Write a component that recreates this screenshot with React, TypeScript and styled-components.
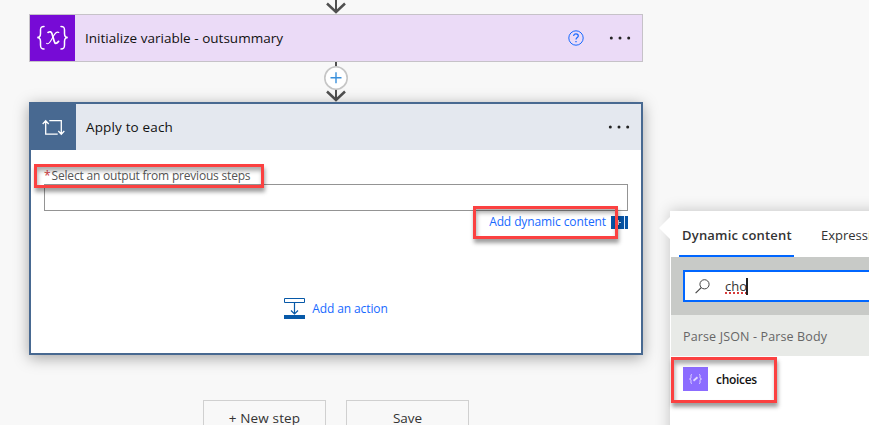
import React from 'react';
import styled, { createGlobalStyle } from 'styled-components';

const GlobalStyle = createGlobalStyle`
  * { box-sizing: border-box; }
  body { margin: 0; background: #f8f8f8; overflow: hidden; }
`;

const Page = styled.main`
  position: relative;
  display: flex;
  align-items: flex-start;
  width: 869px;
  height: 425px;
  overflow: hidden;
  background: #f8f8f8;
  color: #111;
  font-family: 'Open Sans', 'Noto Sans', sans-serif;
`;

const Flow = styled.section`
  display: flex;
  flex-direction: column;
  align-items: center;
  flex: none;
  width: 614px;
  margin-left: 29px;
`;

const Label = styled.span<{ $size?: number; $spacing?: number; $color?: string; $weight?: number }>`
  font-size: ${(p) => p.$size ?? 13}px;
  letter-spacing: ${(p) => p.$spacing ?? 0}px;
  color: ${(p) => p.$color ?? '#111'};
  font-weight: ${(p) => p.$weight ?? 400};
  line-height: 18px;
  white-space: pre;
`;

const Icon = styled.svg`
  display: block;
  flex: none;
`;

const VariableCard = styled.article`
  display: flex;
  align-items: center;
  width: 100%;
  height: 48px;
  border: 1px solid #c6c2c8;
  background: #ebdbf7;
`;

const IconTile = styled.div<{ $color: string; $width: number }>`
  display: grid;
  place-items: center;
  align-self: stretch;
  flex: none;
  width: ${(p) => p.$width}px;
  margin-right: 10px;
  background: ${(p) => p.$color};
`;

const Actions = styled.div`
  display: flex;
  align-items: center;
  gap: 25px;
  margin-left: auto;
  padding-right: 11px;
`;

const LoopCard = styled.article`
  display: flex;
  flex-direction: column;
  width: 100%;
  height: 253px;
  border: 2px solid #486991;
  background: #fff;
  box-shadow: 0 3px 14px rgba(0, 0, 0, 0.34);
`;

const LoopHeader = styled.header`
  display: flex;
  align-items: center;
  height: 46px;
  background: #e4e8ef;
`;

const LoopBody = styled.div`
  display: flex;
  flex-direction: column;
  padding: 17px 13px 0;
`;

const FieldLabel = styled.label`
  display: flex;
  gap: 1px;
  height: 17px;
`;

const OutputInput = styled.div`
  height: 27px;
  border: 1px solid #949494;
  background: #fff;
`;

const DynamicRow = styled.div`
  display: flex;
  justify-content: flex-end;
  align-items: center;
  gap: 5px;
  height: 22px;
`;

const AddAction = styled.div`
  display: flex;
  align-items: center;
  align-self: center;
  gap: 7px;
  margin: 65px 0 0 0;
`;

const Buttons = styled.div`
  display: flex;
  gap: 20px;
  margin-top: 45px;
`;

const Button = styled.div`
  display: flex;
  justify-content: center;
  width: 123px;
  height: 36px;
  padding-top: 8px;
  border: 1px solid #d0d0d0;
`;

const Flyout = styled.aside`
  flex: none;
  width: 260px;
  height: 260px;
  margin: 211px 0 0 27px;
  position: relative;
  background: #fff;
  box-shadow: 0 0 14px rgba(0, 0, 0, 0.22);
`;

const Pointer = styled(Icon)`
  position: absolute;
  left: -12px;
  top: 5px;
`;

const Tabs = styled.nav`
  display: flex;
  gap: 24px;
  height: 46px;
  padding-left: 9px;
`;

const Tab = styled.div<{ $active?: boolean }>`
  padding: 12px 0 0 3px;
  width: ${(p) => (p.$active ? '115px' : 'auto')};
  border-bottom: 2px solid ${(p) => (p.$active ? '#0066ff' : 'transparent')};
`;

const SearchBand = styled.div`
  height: 58px;
  margin-left: 1px;
  padding: 13px 0 0 12px;
  background: #c8cac7;
`;

const SearchBox = styled.div`
  display: flex;
  align-items: center;
  width: 280px;
  height: 32px;
  padding-left: 10px;
  border: 2px solid #0066ff;
  background: #fff;
`;

const Query = styled.div`
  display: flex;
  align-items: center;
  margin-left: 15px;
  & > span {
    text-decoration: underline dotted #d83b3b 2px;
    text-underline-offset: 1px;
    text-decoration-skip-ink: none;
  }
`;

const Caret = styled.i`
  width: 2px;
  height: 17px;
  margin-left: -1px;
  background: #222;
`;

const GroupHeader = styled.div`
  height: 41px;
  margin-left: 1px;
  padding: 9px 0 0 12px;
  background: #e8eae7;
`;

const ResultRow = styled.div`
  display: flex;
  align-items: center;
  gap: 8px;
  height: 46px;
  padding-left: 13px;
  & > span { padding-top: 2px; }
`;

const Highlight = styled.div<{ $x: number; $y: number; $w: number; $h: number }>`
  position: absolute;
  left: ${(p) => p.$x}px;
  top: ${(p) => p.$y}px;
  width: ${(p) => p.$w}px;
  height: ${(p) => p.$h}px;
  border: 3px solid #fb4141;
  box-shadow: 1px 4px 4px rgba(0, 0, 0, 0.38), inset 1px 4px 4px rgba(0, 0, 0, 0.32);
`;

const Dots = () => (
  <Icon width="22" height="4" viewBox="0 0 22 4" fill="#222">
    <circle cx="2.3" cy="2" r="1.5" />
    <circle cx="11" cy="2" r="1.5" />
    <circle cx="19.7" cy="2" r="1.5" />
  </Icon>
);

const TopArrow = () => (
  <Icon width="24" height="14" viewBox="0 0 24 14" fill="none" stroke="#505050">
    <path d="M12 0V12" strokeWidth="2" />
    <path d="M3 3.5L12 12L21 3.5" strokeWidth="2.5" />
  </Icon>
);

const InsertArrow = () => (
  <Icon width="26" height="40" viewBox="0 0 26 40" fill="none" stroke="#505050">
    <path d="M13 0V38" strokeWidth="2" />
    <path d="M4 29.5L13 38L22 29.5" strokeWidth="2.5" />
    <circle cx="13" cy="16" r="11.2" fill="#fff" stroke="#c6c6c6" strokeWidth="1.6" />
    <path d="M7.5 15.7H18.5M13 10.2V21.2" stroke="#3990dc" strokeWidth="1.4" />
  </Icon>
);

const VariableIcon = () => (
  <Icon width="33" height="26" viewBox="0 0 33 26" fill="none" stroke="#fff" strokeLinecap="round">
    <path d="M8 1.5C4.5 1.5 4.5 3 4.5 5V8.5C4.5 11 4 12.5 1.2 12.5C4 12.5 4.5 14 4.5 16.5V20C4.5 22.5 4.8 24 8 24" strokeWidth="1.5" />
    <path d="M25 1.5C28.5 1.5 28.5 3 28.5 5V8.5C28.5 11 29 12.5 31.8 12.5C29 12.5 28.5 14 28.5 16.5V20C28.5 22.5 28.2 24 25 24" strokeWidth="1.5" />
    <path d="M12 7.4C14.2 6.2 15.4 6.6 16.1 9L18.2 16.2C18.9 19 20.4 19 22.6 16.4" strokeWidth="1.7" />
    <path d="M22.8 7.4C21 6.4 19.4 7.6 17.3 11.3C15 15.5 13 20 10.6 18.4" strokeWidth="1.1" />
  </Icon>
);

const LoopIcon = () => (
  <Icon width="23" height="17" viewBox="0 0 23 17" fill="none" stroke="#fff" strokeWidth="1.3">
    <path d="M3.7 1.5V15.2H15.7M.7 5L3.7 1.7L6.7 5M7.3 1.7H19.3V15M16.3 12L19.3 15.2L22.3 12" />
  </Icon>
);

const HelpIcon = () => (
  <Icon width="16" height="16" viewBox="0 0 16 16" fill="none" stroke="#1769ff">
    <circle cx="8" cy="8" r="7.2" strokeWidth="1" />
    <path d="M5.7 6C5.7 4.6 6.6 3.8 8 3.8S10.3 4.7 10.3 5.9C10.3 7.5 8 7.6 8 9.6" strokeWidth="1.2" />
    <path d="M8 11V12.3" strokeWidth="1.3" />
  </Icon>
);

const ContentIcon = () => (
  <Icon width="17" height="13" viewBox="0 0 17 13">
    <path fill="#0754a5" d="M0 0H17V13H0Z" />
    <path d="M5 6.5H10M7.5 4V9M13.5 0V13" stroke="#dcecff" />
  </Icon>
);

const ActionIcon = () => (
  <Icon width="21" height="21" viewBox="0 0 21 21" fill="none" stroke="#0759a8">
    <path d="M.5 .5H20.5V4.5H.5Z" />
    <path d="M10.5 5V15.5M7 12.5L10.5 16L14 12.5" strokeWidth="1.2" />
    <path d="M0 17H21V21H0Z" fill="#0759a8" stroke="none" />
  </Icon>
);

const SearchIcon = () => (
  <Icon width="15" height="15" viewBox="0 0 15 15" fill="none" stroke="#444">
    <circle cx="9.5" cy="5.3" r="4.6" />
    <path d="M6.2 8.6L.6 14.2" strokeWidth="1.2" />
  </Icon>
);

const JsonIcon = () => (
  <Icon width="25" height="24" viewBox="0 0 25 24" fill="none" stroke="#e3d9ff">
    <path fill="#8c6cff" stroke="none" d="M0 0H25V24H0Z" />
    <path d="M9 7.5C7.5 7.5 8 9 8 10.2S7.5 12 6.5 12C7.5 12 8 12.5 8 13.8S7.5 16.5 9 16.5M16 7.5C17.5 7.5 17 9 17 10.2S17.5 12 18.5 12C17.5 12 17 12.5 17 13.8S17.5 16.5 16 16.5" />
    <path d="M10.5 13.7L14.5 10.3" strokeWidth="1.8" />
  </Icon>
);

export default function App() {
  return (
    <Page>
      <GlobalStyle />
      <Flow>
        <TopArrow />
        <VariableCard>
          <IconTile $color="#770bd6" $width={45}><VariableIcon /></IconTile>
          <Label $size={13.5} $spacing={0.02}>Initialize variable - outsummary</Label>
          <Actions><HelpIcon /><Dots /></Actions>
        </VariableCard>
        <InsertArrow />
        <LoopCard>
          <LoopHeader>
            <IconTile $color="#486991" $width={45}><LoopIcon /></IconTile>
            <Label $size={13.5} $spacing={0.15}>Apply to each</Label>
            <Actions><Dots /></Actions>
          </LoopHeader>
          <LoopBody>
            <FieldLabel>
              <Label $size={12} $color="#d13438">*</Label>
              <Label $size={12} $spacing={-0.2} $color="#555">Select an output from previous steps</Label>
            </FieldLabel>
            <OutputInput />
            <DynamicRow>
              <Label $size={12} $spacing={-0.1} $color="#1769ff">Add dynamic content</Label>
              <ContentIcon />
            </DynamicRow>
            <AddAction>
              <ActionIcon />
              <Label $size={12} $spacing={-0.1} $color="#1769ff">Add an action</Label>
            </AddAction>
          </LoopBody>
        </LoopCard>
        <Buttons>
          <Button><Label $size={13.5} $spacing={0.15} $color="#333">+ New step</Label></Button>
          <Button><Label $size={13.5} $color="#333">Save</Label></Button>
        </Buttons>
      </Flow>
      <Flyout>
        <Pointer width="12" height="24" viewBox="0 0 12 24">
          <path d="M12 1L1 12L12 23Z" fill="#fff" />
        </Pointer>
        <Tabs>
          <Tab $active><Label $spacing={0.2} $color="#333" $weight={600}>Dynamic content</Label></Tab>
          <Tab><Label $color="#333">Expression</Label></Tab>
        </Tabs>
        <SearchBand>
          <SearchBox>
            <SearchIcon />
            <Query><Label $color="#333">cho</Label><Caret /></Query>
          </SearchBox>
        </SearchBand>
        <GroupHeader><Label $size={12.5} $spacing={0.14} $color="#666">Parse JSON - Parse Body</Label></GroupHeader>
        <ResultRow><JsonIcon /><Label $size={12} $spacing={-0.3} $weight={600}>choices</Label></ResultRow>
      </Flyout>
      <Highlight $x={34} $y={164} $w={230} $h={24} />
      <Highlight $x={473} $y={206} $w={145} $h={33} />
      <Highlight $x={671} $y={357} $w={106} $h={46} />
    </Page>
  );
}
